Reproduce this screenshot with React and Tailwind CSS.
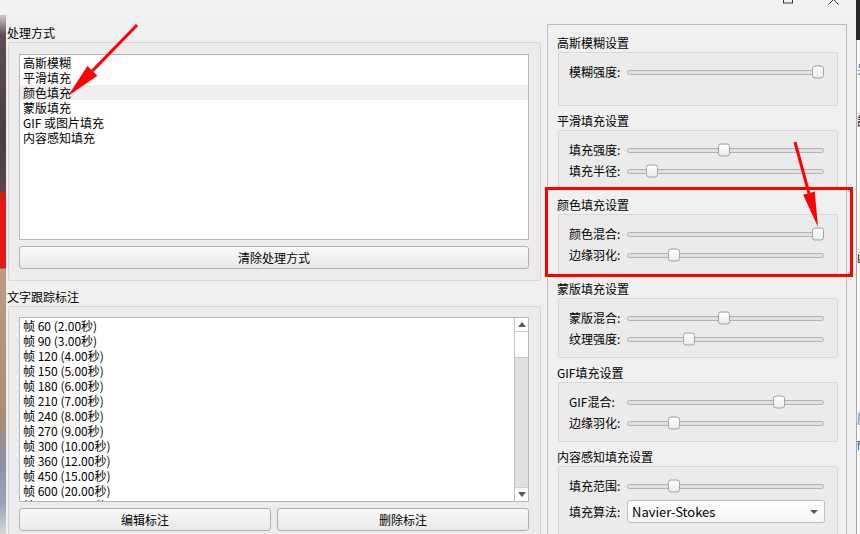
import React from 'react';

const procItems = ['高斯模糊', '平滑填充', '颜色填充', '蒙版填充', 'GIF 或图片填充', '内容感知填充'];
const frames = [
  [60, '2.00'], [90, '3.00'], [120, '4.00'], [150, '5.00'], [180, '6.00'], [210, '7.00'],
  [240, '8.00'], [270, '9.00'], [300, '10.00'], [360, '12.00'], [450, '15.00'], [600, '20.00'], [900, '30.00'],
];

const sections = [
  { title: '高斯模糊设置', rows: [['模糊强度:', 1]], h: 'h-[54px]' },
  { title: '平滑填充设置', rows: [['填充强度:', 0.49], ['填充半径:', 0.1]], h: 'h-[60px]' },
  { title: '颜色填充设置', rows: [['颜色混合:', 1], ['边缘羽化:', 0.22]], h: 'h-[60px]' },
  { title: '蒙版填充设置', rows: [['蒙版混合:', 0.49], ['纹理强度:', 0.3]], h: 'h-[60px]' },
  { title: 'GIF填充设置', rows: [['GIF混合:', 0.79], ['边缘羽化:', 0.22]], h: 'h-[60px]' },
  { title: '内容感知填充设置', rows: [['填充范围:', 0.22]], combo: 'Navier-Stokes', h: 'h-[80px]' },
];

function Slider({ value }) {
  return (
    <div className="relative flex-1 h-[20px] flex items-center">
      <div className="w-full h-[5px] rounded-[3px] border border-[#b3b3b3] bg-[#e1e1e1]" />
      <div
        className="absolute top-1/2 -translate-y-1/2 w-[12px] h-[13px] rounded-[3px] border border-[#a3a3a3] bg-gradient-to-b from-[#ffffff] to-[#ececec]"
        style={{ left: `calc(${value} * (100% - 12px))` }}
      />
    </div>
  );
}

function Button({ children, className = '' }) {
  return (
    <div className={`h-[23px] rounded-[3px] border border-[#b0b0b0] bg-gradient-to-b from-[#f9f9f9] to-[#e9e9e9] flex items-center justify-center text-[12px] text-black ${className}`}>
      {children}
    </div>
  );
}

function Scrollbar() {
  return (
    <div className="w-[14px] shrink-0 border-l border-[#c3c3c3] flex flex-col bg-white">
      <div className="h-[14px] flex items-center justify-center border-b border-[#cfcfcf]">
        <svg width="8" height="5" viewBox="0 0 8 5"><path d="M0 5 L4 0 L8 5 Z" fill="#5a5a5a" /></svg>
      </div>
      <div className="h-[26px] bg-white border-b border-[#c8c8c8]" />
      <div className="flex-1 bg-[#e0e0e0]" />
      <div className="h-[14px] flex items-center justify-center border-t border-[#cfcfcf]">
        <svg width="8" height="5" viewBox="0 0 8 5"><path d="M0 0 L8 0 L4 5 Z" fill="#5a5a5a" /></svg>
      </div>
    </div>
  );
}

export default function App() {
  return (
    <div className="relative w-[860px] h-[534px] overflow-hidden flex bg-[#f0f0f0] font-['Noto_Sans_CJK_SC','Microsoft_YaHei',sans-serif] text-[12px] text-black">
      {/* left strip: other window behind */}
      <div className="w-[6px] shrink-0 flex flex-col">
        <div className="h-[15px] bg-[#f3f3f3]" />
        <div className="flex-1 bg-[linear-gradient(to_bottom,#cfc9cb_0px,#5e4d56_20px,#4b3f46_120px,#5a4550_177px,#e01818_178px,#e01818_253px,#b89c86_254px,#a98e7a_400px,#8c93a8_450px,#9aa4bb_490px,#d8d8d8_519px)]" />
      </div>

      {/* main window */}
      <div className="w-[850px] shrink-0 flex flex-col">
        {/* title bar */}
        <div className="h-[15px] shrink-0 bg-[#f3f3f3] flex overflow-hidden">
          <svg className="ml-[777px] -mt-[7px]" width="10" height="11" viewBox="0 0 10 11">
            <rect x="0.5" y="0.5" width="9" height="9.5" fill="none" stroke="#3a3a3a" strokeWidth="1" />
          </svg>
          <svg className="ml-[35px] -mt-[6px]" width="11" height="11" viewBox="0 0 11 11">
            <path d="M0.5 0.5 L10.5 10.5 M10.5 0.5 L0.5 10.5" stroke="#3a3a3a" strokeWidth="1" />
          </svg>
        </div>

        {/* body */}
        <div className="flex-1 flex min-h-0">
          {/* left column */}
          <div className="ml-[2px] w-[533px] shrink-0 flex flex-col">
            <div className="mt-[8px] h-[19px] leading-[19px] -ml-px">处理方式</div>
            <div className="h-[239px] border border-[#d6d6d6] bg-[#ececec] rounded-[2px] pt-[11px] pl-[10px] pr-[11px] flex flex-col">
              <div className="h-[186px] border border-[#b6b6b6] bg-white flex flex-col">
                {procItems.map((t, i) => (
                  <div key={t} className={`h-[15px] leading-[15px] pl-[3px] ${i === 2 ? 'bg-[#efefef]' : ''}`}>{t}</div>
                ))}
              </div>
              <Button className="mt-[6px]">清除处理方式</Button>
            </div>

            <div className="mt-[6px] h-[19px] leading-[19px] -ml-px">文字跟踪标注</div>
            <div className="flex-1 border border-[#d6d6d6] border-b-0 bg-[#ececec] rounded-t-[2px] pt-[10px] pl-[10px] pr-[11px] flex flex-col">
              <div className="h-[185px] border border-[#b6b6b6] bg-white flex">
                <div className="flex-1 overflow-hidden">
                  {frames.map(([f, s]) => (
                    <div key={f} className="h-[15px] leading-[15px] pl-[3px] whitespace-nowrap">帧 {f} ({s}秒)</div>
                  ))}
                </div>
                <Scrollbar />
              </div>
              <div className="mt-[6px] flex gap-[6px]">
                <Button className="flex-1">编辑标注</Button>
                <Button className="flex-1">删除标注</Button>
              </div>
            </div>
          </div>

          {/* right group */}
          <div className="ml-[6px] mt-[9px] w-[300px] shrink-0 border border-[#bcbcbc] border-b-0 bg-[#f0f0f0] pt-[8px] pl-[10px] pr-[8px] flex flex-col">
            {sections.map((s, si) => (
              <div key={si} className="flex flex-col mb-[5px]">
                <div className="h-[19px] leading-[19px] -ml-px">{s.title}</div>
                <div className={`${s.h} shrink-0 border border-[#d9d9d9] bg-[#ebebeb] rounded-[2px] pt-[9px] pl-[10px] pr-[13px] flex flex-col gap-[1px]`}>
                  {s.rows.map(([label, v], ri) => (
                    <div key={ri} className="h-[20px] flex items-center">
                      <div className="w-[58px] shrink-0 leading-[20px] whitespace-nowrap">{label}</div>
                      <Slider value={v} />
                    </div>
                  ))}
                  {s.combo && (
                    <div className="mt-[3px] h-[23px] flex items-center">
                      <div className="w-[58px] shrink-0 whitespace-nowrap">填充算法:</div>
                      <div className="flex-1 -mr-px h-[23px] rounded-[3px] border border-[#bdbdbd] bg-gradient-to-b from-[#ffffff] to-[#f6f6f6] flex items-center pl-[4px] pr-[6px]">
                        <span className="flex-1 text-[13px]">{s.combo}</span>
                        <svg width="8" height="4" viewBox="0 0 8 4"><path d="M0 0 L8 0 L4 4 Z" fill="#5a5a5a" /></svg>
                      </div>
                    </div>
                  )}
                </div>
              </div>
            ))}
          </div>
          <div className="flex-1" />
        </div>
      </div>

      {/* right strip: other window behind */}
      <div className="w-[4px] shrink-0 flex flex-col overflow-hidden">
        <div className="h-[40px] bg-[#262626]" />
        <div className="flex-1 border-l border-[#a8a8a8] bg-[#fbfbfb] flex flex-col text-[12px] leading-[14px] whitespace-nowrap">
          <div className="h-[22px]" />
          <div className="h-[14px] text-[#2a6fb0]">另</div>
          <div className="h-[38px] border-b border-[#e2e2e2]" />
          <div className="h-[14px]">諸</div>
          <div className="h-[122px] border-b border-[#e2e2e2]" />
          <div className="h-[14px]">函</div>
          <div className="h-[148px] border-b border-[#e2e2e2]" />
          <div className="h-[14px] text-[#2a6fb0]">厨</div>
          <div className="h-[12px]" />
          <div className="h-[14px] text-[#2a6fb0]">ħ</div>
        </div>
      </div>

      {/* red annotations */}
      <div className="absolute left-[545px] top-[187px] w-[308px] h-[90px] border-[3px] border-[#ff0000] pointer-events-none" />
      <svg className="absolute left-0 top-0 pointer-events-none" width="860" height="534" viewBox="0 0 860 534">
        <line x1="137" y1="25" x2="92.4" y2="70.9" stroke="#ff0000" strokeWidth="3" />
        <polygon points="68,96 97.4,75.8 87.4,66" fill="#ff0000" />
        <line x1="795" y1="142" x2="808.9" y2="193.2" stroke="#ff0000" strokeWidth="3" />
        <polygon points="818,227 814.7,191.6 803.1,194.8" fill="#ff0000" />
      </svg>
    </div>
  );
}
